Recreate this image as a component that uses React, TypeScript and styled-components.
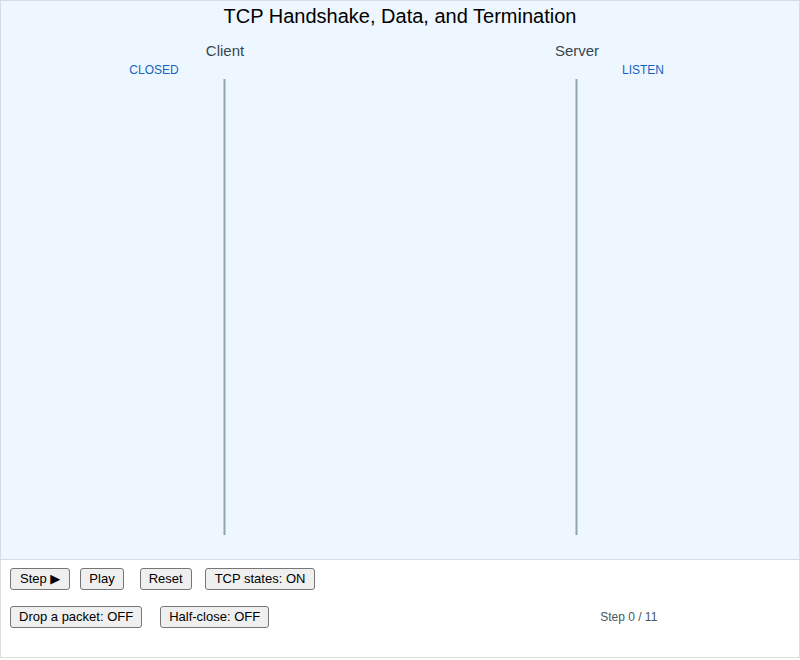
import styled, { createGlobalStyle } from 'styled-components';

const GlobalStyle = createGlobalStyle`
  html, body {
    margin: 0;
    padding: 0;
    background: #ffffff;
    font-family: 'Liberation Sans', Arial, sans-serif;
  }
`;

const LIFELINES = [
  { name: 'Client', x: 223, state: 'CLOSED', stateX: 153 },
  { name: 'Server', x: 575, state: 'LISTEN', stateX: 642 },
];

export default function App() {
  return (
    <Page>
      <GlobalStyle />
      <Diagram>
        <Title>TCP Handshake, Data, and Termination</Title>
        <Chart viewBox='0 0 798 530' width={798} height={530}>
          {LIFELINES.map((l) => (
            <g key={l.name}>
              <text x={l.x + 1} y={26.5} textAnchor='middle' fontSize={15} fill='#37474f'>
                {l.name}
              </text>
              <text x={l.stateX} y={45} textAnchor='middle' fontSize={12} fill='#1565c0'>
                {l.state}
              </text>
              <line x1={l.x + 0.5} y1={50} x2={l.x + 0.5} y2={506} stroke='#90a4ae' strokeWidth={2} />
            </g>
          ))}
        </Chart>
      </Diagram>
      <Controls>
        <Row>
          <Button $pad={9}>
            Step <Arrow>▶</Arrow>
          </Button>
          <Button $gap={10}>Play</Button>
          <Button $gap={16}>Reset</Button>
          <Button $gap={13} $pad={9}>TCP states: ON</Button>
        </Row>
        <Row>
          <Button>Drop a packet: OFF</Button>
          <Button $gap={18}>Half-close: OFF</Button>
          <Status>Step 0 / 11</Status>
        </Row>
      </Controls>
    </Page>
  );
}

const Page = styled.div`
  width: 800px;
  display: flex;
  flex-flow: column nowrap;
`;

const Diagram = styled.div`
  box-sizing: border-box;
  height: 560px;
  border: 1px solid #d5dce3;
  background-color: #eef6ff;
  display: flex;
  flex-flow: column nowrap;
`;

const Title = styled.div`
  height: 28px;
  padding-top: 4px;
  box-sizing: border-box;
  text-align: center;
  font-size: 20px;
  line-height: 22px;
  color: #000000;
`;

const Chart = styled.svg`
  display: block;
  font-family: 'Liberation Sans', Arial, sans-serif;
`;

const Controls = styled.div`
  box-sizing: border-box;
  height: 98px;
  border: 1px solid #dddddd;
  border-top: none;
  background-color: #ffffff;
  padding: 8px 9px 0 9px;
  display: flex;
  flex-flow: column nowrap;
  gap: 16px;
`;

const Row = styled.div`
  display: flex;
  flex-flow: row nowrap;
  align-items: center;
  height: 22px;
`;

const Button = styled.button<{ $gap?: number; $pad?: number }>`
  box-sizing: border-box;
  height: 22px;
  margin: 0 0 0 ${({ $gap }) => $gap ?? 0}px;
  padding: 0 ${({ $pad }) => $pad ?? 8}px;
  font-family: 'Liberation Sans', Arial, sans-serif;
  font-size: 13px;
  line-height: 20px;
  color: #000000;
  background-color: #efefef;
  border: 1px solid #767676;
  border-radius: 3px;
  white-space: nowrap;
  cursor: pointer;
`;

const Arrow = styled.span`
  font-family: 'DejaVu Sans', sans-serif;
  font-size: 13px;
`;

const Status = styled.div`
  margin-left: 331px;
  font-size: 12px;
  color: #455a64;
`;
